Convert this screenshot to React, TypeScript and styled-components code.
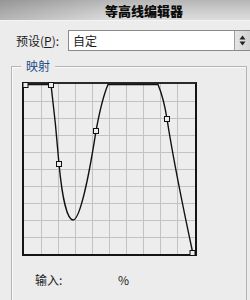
import React from "react";
import styled, { createGlobalStyle } from "styled-components";

const Global = createGlobalStyle`
  html, body { margin: 0; padding: 0; background: #ececec; }
  body { font-family: "Noto Sans CJK SC", "Noto Sans", sans-serif; }
`;

const Window = styled.div`
  width: 250px;
  height: 300px;
  overflow: hidden;
  background: #ececec;
  display: flex;
  flex-direction: column;
`;

const TitleBar = styled.div`
  height: 21px;
  flex: none;
  display: flex;
  align-items: center;
  padding-left: 105px;
  box-sizing: border-box;
  background:
    linear-gradient(to right, rgba(0, 0, 0, 0.18), rgba(0, 0, 0, 0) 45%),
    linear-gradient(to bottom, #b6b6b6 0%, #cdcdcd 55%, #dddddd 100%);
  border-bottom: 1px solid #f4f4f4;
`;

const Title = styled.span`
  font-size: 13px;
  font-weight: 900;
  color: #0c0c0c;
  line-height: 1;
`;

const PresetRow = styled.div`
  margin-top: 9px;
  height: 21px;
  display: flex;
  align-items: center;
  padding-left: 16px;
  flex: none;
`;

const Label = styled.span`
  font-size: 12px;
  color: #1c1c1c;
  width: 52px;
  flex: none;
  line-height: 1;
`;

const Underline = styled.span`
  text-decoration: underline;
`;

const Select = styled.div`
  flex: 1;
  height: 21px;
  box-sizing: border-box;
  border: 1px solid #8a8a8a;
  border-right: none;
  background: #fff;
  display: flex;
  align-items: stretch;
`;

const SelectValue = styled.span`
  flex: 1;
  font-size: 12px;
  color: #1c1c1c;
  padding-left: 4px;
  display: flex;
  align-items: center;
`;

const Spinner = styled.div`
  width: 15px;
  border-left: 1px solid #a0a0a0;
  background: linear-gradient(to right, #e4e4e4, #d2d2d2);
  display: flex;
  align-items: center;
  justify-content: center;
`;

const GroupBox = styled.div`
  position: relative;
  margin: 15px 3px 0 11px;
  flex: 1;
  border: 1px solid #b4b4b4;
  border-bottom: none;
  box-shadow: inset 1px 1px 0 #fafafa;
  padding: 15px 0 0 10px;
  display: flex;
  flex-direction: column;
`;

const GroupLabel = styled.span`
  position: absolute;
  left: 9px;
  top: -8px;
  padding: 0 5px;
  background: #ececec;
  font-size: 12px;
  line-height: 14px;
  color: #1d4c86;
`;

const Frame = styled.div`
  width: 175px;
  height: 174px;
  box-sizing: border-box;
  border: 2px solid #151515;
  border-top-color: #2a2a2a;
  background: #ededed;
  flex: none;
`;

const Graph = styled.svg`
  display: block;
  overflow: visible;
`;

const InputRow = styled.div`
  margin-top: 17px;
  padding-left: 13px;
  display: flex;
  align-items: center;
  font-size: 12px;
  color: #1c1c1c;
  line-height: 14px;
`;

const InputLabel = styled.span`
  width: 83px;
  flex: none;
`;

const grid = [1, 2, 3, 4, 5, 6, 7, 8, 9];

const points: [number, number][] = [
  [1.5, 1],
  [27, 1],
  [35, 80],
  [72, 47],
  [143, 35],
  [168.5, 169],
];

const curve =
  "M0,0.5 L27,0.5 C30,25 33,55 35,80 C38,112 43,136 49,136 C56,136 65,92 72,47 C76,25 80,10 84,0.5 L134,0.5 C138,10 141,22 143,35 C150,80 160,128 169,170";

export default function App() {
  return (
    <>
      <Global />
      <Window>
        <TitleBar>
          <Title>等高线编辑器</Title>
        </TitleBar>
        <PresetRow>
          <Label>
            预设(<Underline>P</Underline>):
          </Label>
          <Select>
            <SelectValue>自定</SelectValue>
            <Spinner>
              <svg width="7" height="11" viewBox="0 0 7 11">
                <path d="M0.5 4.5 L3.5 0.5 L6.5 4.5 Z" fill="#222" />
                <path d="M0.5 6.5 L3.5 10.5 L6.5 6.5 Z" fill="#222" />
              </svg>
            </Spinner>
          </Select>
        </PresetRow>
        <GroupBox>
          <GroupLabel>映射</GroupLabel>
          <Frame>
            <Graph width="171" height="170" viewBox="0 0 171 170">
              {grid.map((k) => (
                <line
                  key={"v" + k}
                  x1={17 * k + 0.5}
                  y1={0}
                  x2={17 * k + 0.5}
                  y2={170}
                  stroke="#c2c2c2"
                  strokeWidth={1}
                />
              ))}
              {grid.map((k) => (
                <line
                  key={"h" + k}
                  x1={0}
                  y1={17 * k + 0.5}
                  x2={171}
                  y2={17 * k + 0.5}
                  stroke="#c2c2c2"
                  strokeWidth={1}
                />
              ))}
              <path d={curve} fill="none" stroke="#111" strokeWidth={1.4} />
              {points.map(([x, y], i) => (
                <rect
                  key={i}
                  x={x - 2.5}
                  y={y - 2.5}
                  width={5}
                  height={5}
                  fill="#ededed"
                  stroke="#111"
                  strokeWidth={1}
                />
              ))}
            </Graph>
          </Frame>
          <InputRow>
            <InputLabel>输入:</InputLabel>
            <span>%</span>
          </InputRow>
        </GroupBox>
      </Window>
    </>
  );
}
